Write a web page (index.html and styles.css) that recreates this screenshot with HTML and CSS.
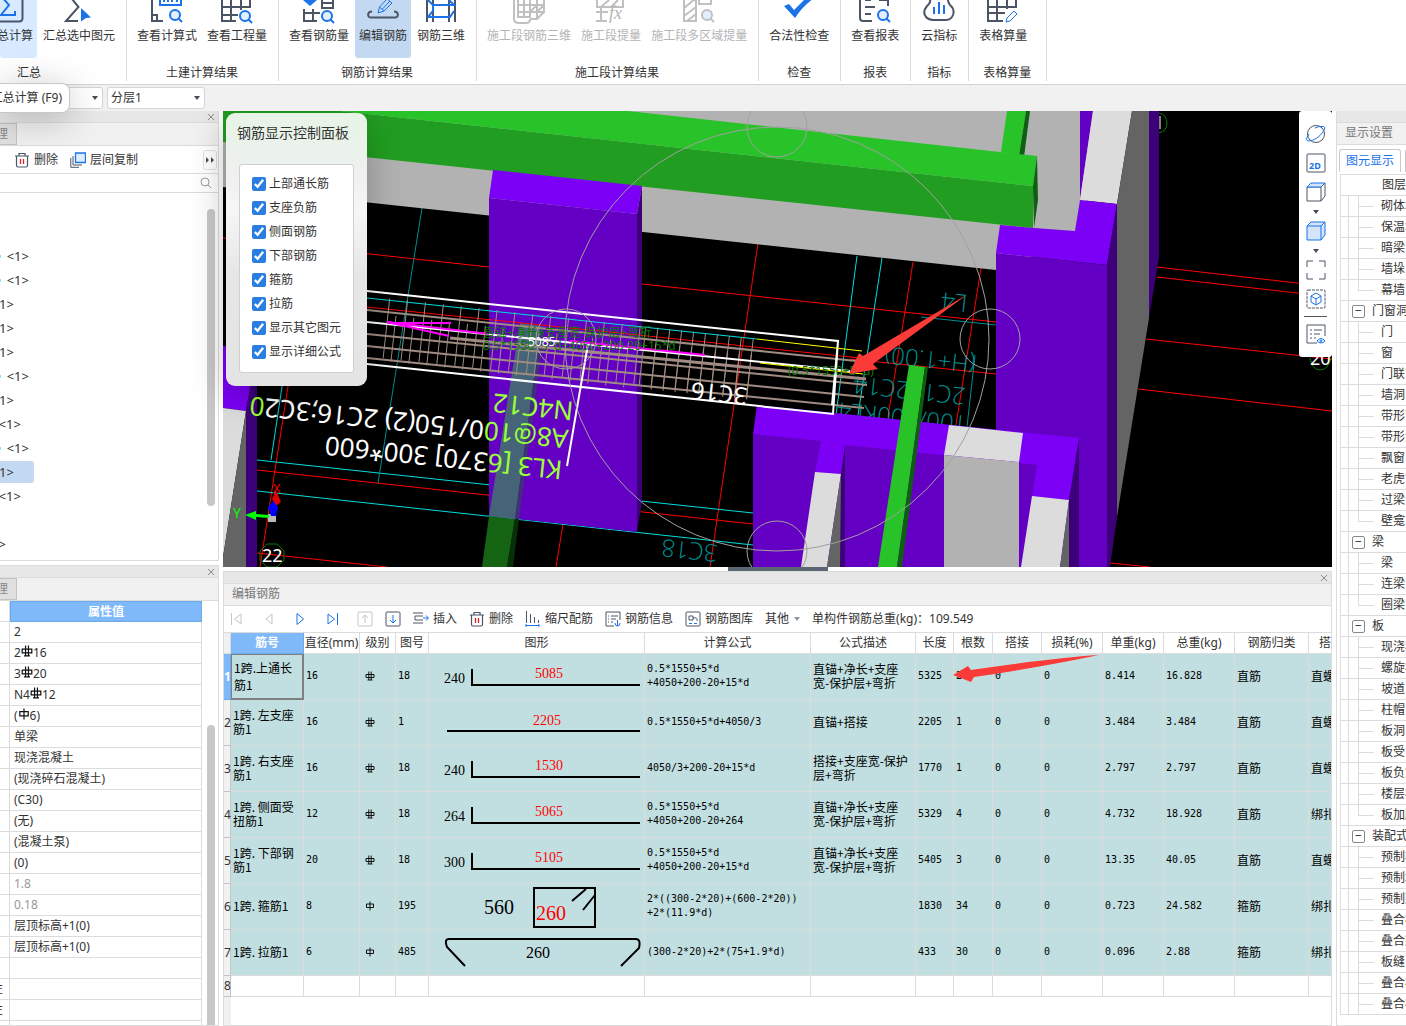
FILE: index.html
```html
<!DOCTYPE html>
<html lang="zh-CN">
<head>
    <meta charset="UTF-8">
    <meta name="viewport" content="width=device-width, initial-scale=1.0">
    <title>编辑钢筋</title>
    <link rel="stylesheet" href="styles.css">
</head>
<body>
    <!-- shared symbols -->
    <svg class="sprite" aria-hidden="true">
        <symbol id="lens" viewBox="0 0 14 14"><circle cx="6" cy="6" r="5" fill="#e3efff"/><path d="M9.500 9.500L13 13"/></symbol>
        <symbol id="trash" viewBox="0 0 16 16"><path d="M1 4h14M5 4V1.500h6V4M2.500 4v9.500q0 1.500 1.500 1.500h8q1.500 0 1.500-1.500V4" fill="none" stroke="#4b5566" stroke-width="1.200"/><path d="M6.500 7v5M9.500 7v5" stroke="#e02020" stroke-width="1.300"/></symbol>
        <symbol id="hrb" viewBox="0 0 10 10"><path d="M1 3.500h8v3H1zM3.800.5V9M6.200.5V9M2.500 9h5" fill="none" stroke="#111"/></symbol>
        <symbol id="hpb" viewBox="0 0 10 10"><path d="M1.500 3h7v3.500h-7zM5 .5V9.500" fill="none" stroke="#111"/></symbol>
        <symbol id="close" viewBox="0 0 8 8"><path d="M1 1l6 6M7 1L1 7" stroke="#8a8a8a" fill="none"/></symbol>
    </svg>

    <header class="ribbon">
        <section class="group group-first">
            <div class="tools">
                <button class="tool hot"><svg viewBox="0 0 32 24"><path class="d" d="M2 0V18q0 3.500 4 3.500H26q3.500 0 3.500-3.500V0"/><path class="b" d="M8 -4L16 5L8 15H22V11"/></svg>汇总计算</button>
                <button class="tool"><svg viewBox="0 0 32 24"><path class="d" d="M9 -1L15.500 7L3 21H15"/><path fill="#1a73e8" d="M18 8L28 17.500L23 18L18 21.500z"/></svg>汇总选中图元</button>
            </div>
            <h2>汇总</h2>
        </section>
        <section class="group">
            <div class="tools">
                <button class="tool"><svg viewBox="0 0 32 24"><path class="d" d="M1 0V21H12M1 15H6V21"/><path class="b" d="M9 0V5H30V0M13 0V2M17 0V2M21 0V2M26 0V2"/><use href="#lens" class="b" x="18" y="9" width="14" height="14"/></svg>查看计算式</button>
                <button class="tool"><svg viewBox="0 0 32 24"><path class="d" d="M1 0V21H15M10 0V21M20 0V10M29 0V7H1M1 15H17"/><use href="#lens" class="b" x="18" y="10" width="14" height="14"/></svg>查看工程量</button>
            </div>
            <h2>土建计算结果</h2>
        </section>
        <section class="group">
            <div class="tools">
                <button class="tool"><svg viewBox="0 0 32 24"><path class="d" d="M1 9V21H14M10 9V21M1 13H17M19 0V8H30V0M19 3H30"/><path fill="#1a73e8" d="M0 0L7 6L14 0z"/><use href="#lens" class="b" x="18" y="10" width="14" height="14"/></svg>查看钢筋量</button>
                <button class="tool active"><svg viewBox="0 0 32 24"><path class="d" d="M5 11.500C0 11.500 0 17.500 4 17.500H28C32 17.500 32 11.500 27 11.500"/><path class="b thin" d="M11 13L12.500 7L20 -1L25 3L17 11zM12.500 7L17 11M15.500 9L23 1"/></svg>编辑钢筋</button>
                <button class="tool"><svg viewBox="0 0 32 24"><path class="d" d="M2 0V22M8 0V22M24 0V22M30 0V22"/><path class="b" d="M3 17L8 11L8 5M8 5H29L24 0M3 17H25L29 11M8 5L3 0"/></svg>钢筋三维</button>
            </div>
            <h2>钢筋计算结果</h2>
        </section>
        <section class="group">
            <div class="tools">
                <button class="tool" disabled><svg viewBox="0 0 32 24"><path class="d" d="M1 0V19q0 4 5 4H13q4 0 4-4M5 0V17H17V0M11 0V17M5 5H31V0M5 12H31V5M24 0V19H17M31 5L24 12M24 5L17 12M31 12L24 19"/></svg>施工段钢筋三维</button>
                <button class="tool" disabled><svg viewBox="0 0 32 24"><path class="d" d="M2 0V7H28V0M6 7V22M1 12H13M1 21H12M6 7L14 0M16 7L23 0"/><text class="fx" x="14" y="19">fx</text></svg>施工段提量</button>
                <button class="tool" disabled><svg viewBox="0 0 32 24"><path class="d" d="M1 0V21H13V0M1 8L12 -1M1 16L13 7M4 21L13 14M16 0V4H28V0"/><use href="#lens" class="g" x="18" y="9" width="14" height="14"/></svg>施工段多区域提量</button>
            </div>
            <h2>施工段计算结果</h2>
        </section>
        <section class="group">
            <div class="tools">
                <button class="tool"><svg viewBox="0 0 32 24"><path fill="#1a73e8" d="M1 6L6 4L11 10L23 -2H31Q19 7 12 18z"/></svg>合法性检查</button>
            </div>
            <h2>检查</h2>
        </section>
        <section class="group">
            <div class="tools">
                <button class="tool"><svg viewBox="0 0 32 24"><path class="d" d="M1 0V18q0 3 3 3H13M6 0H12M6 7H16M6 14H12M20 0H29V6"/><use href="#lens" class="b" x="18" y="9" width="14" height="14"/></svg>查看报表</button>
            </div>
            <h2>报表</h2>
        </section>
        <section class="group">
            <div class="tools">
                <button class="tool"><svg viewBox="0 0 32 24"><path class="d" d="M7 -1Q8 3 4 6Q-1 12 3 17Q6 20 10 20H23Q28 20 30 15Q32 9 27 5Q25 3 25 -1"/><path class="b" d="M11 7V14M16 2V14M21 5V14"/></svg>云指标</button>
            </div>
            <h2>指标</h2>
        </section>
        <section class="group group-wide">
            <div class="tools">
                <button class="tool"><svg viewBox="0 0 32 24"><path class="d" d="M1 0V21H16M10 0V21M20 0V9M29 0V7H1M1 13H18"/><path class="b thin" d="M19 22L20 18L27 11L30 14L23 21z"/></svg>表格算量</button>
            </div>
            <h2>表格算量</h2>
        </section>
    </header>

    <div class="layer-bar">
        <label class="pick pick-floor"><select aria-label="楼层"><option></option></select></label>
        <label class="pick"><select aria-label="分层"><option>分层1</option></select></label>
        <div class="tooltip" role="tooltip">汇总计算 (F9)</div>
    </div>

    <main class="workspace">
        <aside class="left">
            <section class="panel component-list">
                <div class="titlebar"><button aria-label="关闭"><svg><use href="#close"/></svg></button></div>
                <div class="tabs"><button class="tab">理</button></div>
                <div class="list-tools">
                    <button class="text-btn del"><svg viewBox="0 0 16 16"><use href="#trash"/></svg>删除</button>
                    <button class="text-btn"><svg viewBox="0 0 16 16"><path d="M5.500 1h10v9.500h-10z" fill="#dfebff" stroke="#1a73e8" stroke-width="1.300"/><path d="M3 4v9h9M.8 6v9.300H9" fill="none" stroke="#4b5566"/></svg>层间复制</button>
                    <button class="more" aria-label="更多"><svg viewBox="0 0 10 8"><path d="M1 1l3 3-3 3zM6 1l3 3-3 3z" fill="#444c5a"/></svg></button>
                </div>
                <div class="search"><svg viewBox="0 0 12 12"><circle cx="5" cy="5" r="4" fill="none" stroke="#999"/><path d="M8 8l3 3" stroke="#999"/></svg></div>
                <div class="list-body">
                    <ul class="members">
                        <li class="lv3 dot">&lt;1&gt;</li>
                        <li class="lv3 dot">&lt;1&gt;</li>
                        <li class="lv1">&lt;1&gt;</li>
                        <li class="lv1">&lt;1&gt;</li>
                        <li class="lv1">&lt;1&gt;</li>
                        <li class="lv3 dot">&lt;1&gt;</li>
                        <li class="lv1">&lt;1&gt;</li>
                        <li class="lv2">&lt;1&gt;</li>
                        <li class="lv3 dot">&lt;1&gt;</li>
                        <li class="lv1 selected">&lt;1&gt;</li>
                        <li class="lv2">&lt;1&gt;</li>
                        <li class="lv2"></li>
                        <li class="lv0">&lt;1&gt;</li>
                    </ul>
                    <div class="scroll"></div>
                </div>
            </section>
            <section class="panel props">
                <div class="titlebar"><button aria-label="关闭"><svg><use href="#close"/></svg></button></div>
                <div class="tabs"><button class="tab">理</button></div>
                <div class="props-body">
                    <table>
                        <thead><tr><td></td><th>属性值</th></tr></thead>
                        <tbody>
                            <tr><td></td><td>2</td></tr>
                            <tr><td></td><td>2<svg><use href="#hrb"/></svg>16</td></tr>
                            <tr><td></td><td>3<svg><use href="#hrb"/></svg>20</td></tr>
                            <tr><td></td><td>N4<svg><use href="#hrb"/></svg>12</td></tr>
                            <tr><td></td><td>(<svg><use href="#hpb"/></svg>6)</td></tr>
                            <tr><td></td><td>单梁</td></tr>
                            <tr><td></td><td>现浇混凝土</td></tr>
                            <tr><td></td><td>(现浇碎石混凝土)</td></tr>
                            <tr><td></td><td>(C30)</td></tr>
                            <tr><td></td><td>(无)</td></tr>
                            <tr><td></td><td>(混凝土泵)</td></tr>
                            <tr><td></td><td>(0)</td></tr>
                            <tr class="readonly"><td></td><td>1.8</td></tr>
                            <tr class="readonly"><td></td><td>0.18</td></tr>
                            <tr><td></td><td>层顶标高+1(0)</td></tr>
                            <tr><td></td><td>层顶标高+1(0)</td></tr>
                            <tr><td></td><td></td></tr>
                            <tr><td><span>性</span></td><td></td></tr>
                            <tr><td><span>性</span></td><td></td></tr>
                            <tr><td></td><td></td></tr>
                        </tbody>
                    </table>
                    <div class="scroll"></div>
                </div>
            </section>
        </aside>

        <div class="center">
            <section class="viewport">
                <svg class="scene" viewBox="223 111 1109 456" preserveAspectRatio="xMinYMin slice">
                    <rect x="223" y="111" width="2400" height="1200" fill="#000"/>
                    <!-- axis grid -->
                    <g class="line red">
                        <path d="M223 238L489 267M642 284L996 322M758 243L710 567M913 262L888 417M981 268L956 425M1157 267L1332 287M1157 277L1332 297M1146 339L1332 359M1138 389L1332 411M1110 563L1150 567M850 359L996 374M257 470L753 524M289 380L260 567M257 553L387 567M563 524L556 567"/>
                    </g>
                    <g class="line cyan">
                        <path d="M857 256L836 415M882 258L858 415M257 460L753 513M257 491L753 545M283 380L271 460"/>
                    </g>
                    <path class="line teal" d="M422 208L378 483M921 317L996 325M975 355L967 427"/>
                    <g class="teal-text">
                        <text transform="translate(976 356) rotate(186)">(H+1.00)</text>
                        <text transform="translate(966 388) rotate(186)">2C12</text>
                        <text transform="translate(910 382) rotate(186)">2C14</text>
                        <text transform="translate(968 416) rotate(186)">100/200KL4</text>
                        <text transform="translate(968 295) rotate(186)">L4</text>
                        <text transform="translate(718 545) rotate(186)">3C18</text>
                    </g>
                    <!-- far wall -->
                    <path fill="#b2b2b2" d="M223 111H1100L1080 240L996 270L223 187z"/>
                    <path fill="#28c328" d="M1007 111H1026L1019 156L1001 152z"/>
                    <path fill="#0f5f12" d="M1026 111H1030L1024 157L1019 156z"/>
                    <path fill="#219e21" d="M223 111H340L1033 186V228L223 142z"/>
                    <path fill="#28c328" d="M340 111H628L1037 156L1033 186z"/>
                    <path fill="#0f5f12" d="M1033 186L1037 156L1038 200L1034 228z"/>
                    <!-- middle column -->
                    <path fill="#7b00f5" d="M493 170L642 186L637 214L489 198z"/>
                    <path fill="#6400c3" d="M489 198L637 214V532L489 516z"/>
                    <path fill="#3c0078" d="M637 214L642 186V502L637 532z"/>
                    <path fill="#146414" d="M489 516L515 519L507 567H482z"/>
                    <path fill="#083008" d="M515 519L519 519L513 567H507z"/>
                    <path fill="#466478" d="M520 323L541 326L515 519L489 516z"/>
                    <path fill="#3f3078" d="M541 326L545 327L519 519L515 519z"/>
                    <!-- right column -->
                    <path fill="#6400c3" d="M1080 111H1093L1080 200z"/>
                    <path fill="#dcdcdc" d="M1093 111H1132L1117 204L1080 200z"/>
                    <path fill="#646464" d="M1132 111H1149V318L1117 517V204z"/>
                    <path fill="#3c0078" d="M1149 111H1159V257L1149 318z"/>
                    <path fill="#7b00f5" d="M1000 225L1034 228L1075 231L1080 200L1117 204L1107 265L996 253z"/>
                    <path fill="#6400c3" d="M996 253L1107 265V567H996z"/>
                    <path fill="#3c0078" d="M1107 265L1117 204V517L1110 567H1107z"/>
                    <!-- front walls -->
                    <path fill="#6400c3" d="M753 434L1079 438V567H753z"/>
                    <path fill="#7b00f5" d="M757 405L1079 438L1069 500L1032 496L1037 465L845 445L841 474L815 472L821 441L753 434z"/>
                    <path fill="#dcdcdc" d="M949 425L1023 433L1019 462L944 455zM815 472L841 474L827 567H801zM1032 496L1069 500L1060 567H1021z"/>
                    <path fill="#b2b2b2" d="M944 455L1019 462V567H944z"/>
                    <path fill="#646464" d="M841 474V567H827zM1069 500V567H1060z"/>
                    <path fill="#3c0078" d="M841 474L845 445V567H840zM1069 500L1079 438V567H1069z"/>
                    <path fill="#28c328" d="M909 365L925 367L897 567H878z"/>
                    <path fill="#0f5f12" d="M925 367H928L902 567H897z"/>
                    <!-- left wall -->
                    <path fill="#7b00f5" d="M223 346L257 350L246 411L223 408z"/>
                    <path fill="#dcdcdc" d="M223 408L246 411L223 557z"/>
                    <path fill="#646464" d="M246 411V567H223V557z"/>
                    <path fill="#3c0078" d="M257 350V567H246V411z"/>
                    <!-- beam reinforcement -->
                    <path class="line cyan" d="M367 298L757 339"/>
                    <path class="line red" d="M367 307L860 358"/>
                    <path class="stirrup wide" d="M376 327L640 356"/>
                    <path class="stirrup wide back" d="M388 338L640 366"/>
                    <path class="stirrup tight" d="M642 356L754 369"/>
                    <path class="stirrup tight back" d="M648 366L754 377"/>
                    <path class="bars" d="M367 310L866 362M367 334L867 385M367 346L864 397M367 358L864 408"/>
                    <path class="bars thick" d="M450 338L866 379"/>
                    <path fill="none" stroke="#fff" stroke-width="2" d="M367 291L838 341L833 414L367 364M838 341L832 405M367 322L850 371M588 344L567 466"/>
                    <path fill="none" stroke="#f0f" stroke-width="2" d="M387 323H451M387 322L449 336M387 322L489 334M570 341L705 355"/>
                    <path fill="none" stroke="#ff0" d="M757 339L862 351M760 363L863 374"/>
                    <g class="hint-text">
                        <text x="483" y="337">直锚+净长+支座宽-保护层+弯折</text>
                        <text x="483" y="350">0.5*1550+5*d+4050+200-20+15*d</text>
                        <text x="788" y="375">(0.5*1550+5*d)</text>
                        <text x="528" y="346" fill="#fff">5085</text>
                    </g>
                    <g class="beam-text">
                        <text transform="translate(574 402) rotate(186)">N4C12</text>
                        <text transform="translate(569 430) rotate(186)">A8@10<tspan fill="#fff">0/150(2) 2C16;3C2</tspan>0</text>
                        <text transform="translate(563 461) rotate(186)">KL3 [6<tspan fill="#fff">370] 300*600</tspan></text>
                        <text transform="translate(748 388) rotate(186)" fill="#fff">3C16</text>
                    </g>
                    <!-- orbit rings -->
                    <g fill="none" stroke="#a0a0a0">
                        <circle cx="777" cy="339" r="212"/><circle cx="777" cy="127" r="30"/><circle cx="990" cy="339" r="30"/><circle cx="566" cy="339" r="30"/><circle cx="777" cy="551" r="30"/>
                    </g>
                    <g fill="none" stroke="#0a780a">
                        <path d="M267 544h10l7 7v9l-7 7h-10l-7-7v-9zM1159 113q8 2 8 10t-8 10M1310 358q2 12 10 12t11-12"/>
                    </g>
                    <g class="axis-text">
                        <text x="262" y="562">22</text><text x="1310" y="365">20</text>
                        <path d="M1160 116v13" stroke="#fff"/>
                        <text x="273" y="493" fill="#f00" font-size="13">X</text>
                        <text x="233" y="518" fill="#0f0" font-size="14">Y</text>
                    </g>
                    <path d="M268 514h8v8h-8z" fill="#bbb"/>
                    <path d="M272 499l4-9 5 12-5 4z" fill="#e00000"/>
                    <path d="M245 515l11-4v3l13 1v3l-13-1v3z" fill="#0f0"/>
                    <path d="M273 501l5 6-2 9h-5l-3-9z" fill="#00f"/>
                    <path d="M849 374L859 353L863 356L968 294L873 364L878 369z" fill="#fb3b37"/>
                </svg>

                <form class="rebar-panel">
                    <h3>钢筋显示控制面板</h3>
                    <div class="checks">
                        <label><input type="checkbox" checked>上部通长筋</label>
                        <label><input type="checkbox" checked>支座负筋</label>
                        <label><input type="checkbox" checked>侧面钢筋</label>
                        <label><input type="checkbox" checked>下部钢筋</label>
                        <label><input type="checkbox" checked>箍筋</label>
                        <label><input type="checkbox" checked>拉筋</label>
                        <label><input type="checkbox" checked>显示其它图元</label>
                        <label><input type="checkbox" checked>显示详细公式</label>
                    </div>
                </form>

                <nav class="view-tools">
                    <button aria-label="动态观察"><svg viewBox="0 0 22 22"><circle cx="11" cy="11" r="8.500"/><path class="b" d="M4 11Q-1 18 4 18Q12 17 18 9Q22 3 17 3.500Q14 3 10 5"/></svg></button>
                    <button aria-label="二维"><svg viewBox="0 0 22 22"><rect x="2" y="2" width="18" height="18" rx="1"/><text x="4" y="17">2D</text></svg></button>
                    <button aria-label="线框"><svg viewBox="0 0 22 22"><path d="M2 6H16V20H2zM16 20L20 15V2"/><path class="b solid" d="M2 6L6 2H20L16 6z"/></svg></button>
                    <i></i>
                    <button aria-label="实体"><svg viewBox="0 0 22 22"><path class="b solid" d="M2 6L6 2H20V15L16 20H2zM2 6H16V20M16 6L20 2"/></svg></button>
                    <i></i>
                    <button aria-label="全屏"><svg viewBox="0 0 22 22"><path d="M2 8V2H8M14 2H20V8M20 14V20H14M8 20H2V14"/></svg></button>
                    <button aria-label="局部三维"><svg viewBox="0 0 22 22"><rect x="2" y="2" width="18" height="18" rx="1" stroke-dasharray="3 1"/><path class="b" d="M11 5L16 8V14L11 17L6 14V8zM6 8L11 11L16 8M11 11V17"/></svg></button>
                    <hr>
                    <button aria-label="显示设置"><svg viewBox="0 0 22 22"><path d="M12 20H2V2H20V13M5 7H7M9 7H17M5 11H7M9 11H15M5 15H7M9 15H11"/><path class="b" d="M12 18Q16 13 20 18Q16 22 12 18z"/><circle class="b" cx="16" cy="18" r="1"/></svg></button>
                </nav>
            </section>

            <section class="panel editor">
                <div class="titlebar"><button aria-label="关闭"><svg><use href="#close"/></svg></button></div>
                <h2 class="panel-name">编辑钢筋</h2>
                <div class="edit-tools">
                    <button aria-label="首行" disabled><svg viewBox="0 0 16 16"><path d="M2.500 2v12M12 3v10L5.500 8z"/></svg></button>
                    <button aria-label="上一行" disabled><svg viewBox="0 0 16 16"><path d="M11 3v10L5 8z"/></svg></button>
                    <button aria-label="下一行" class="b"><svg viewBox="0 0 16 16"><path d="M4 2.500v11L10.500 8z"/></svg></button>
                    <button aria-label="末行" class="b"><svg viewBox="0 0 16 16"><path d="M3 3v10L9.500 8zM12.500 2v12"/></svg></button>
                    <button aria-label="上移" disabled><svg viewBox="0 0 16 16"><rect x="1" y="1" width="14" height="14" rx="1"/><path d="M8 12V4M5 7l3-3 3 3"/></svg></button>
                    <button aria-label="下移" class="near"><svg viewBox="0 0 16 16"><rect x="1" y="1" width="14" height="14" rx="1"/><path class="b" d="M8 4v8M5 9l3 3 3-3"/></svg></button>
                    <button class="near"><svg viewBox="0 0 16 16"><path d="M0 2h10M0 12h10M10 5H2v4h8"/><path class="b" d="M10 7h5M13 4.500L15.500 7 13 9.500"/></svg>插入</button>
                    <button class="near"><svg viewBox="0 0 16 16"><use href="#trash"/></svg>删除</button>
                    <button class="near"><svg viewBox="0 0 16 16"><path d="M1.500 0v12M5.500 3v9M9.500 6v6M13.500 9v3"/><path class="b" d="M1 14.500h13M1 13v3M14 13v3"/></svg>缩尺配筋</button>
                    <button class="near"><svg viewBox="0 0 16 16"><path d="M9 15H1V1h14v8M3 5h1M6 5h7M3 8h1M6 8h5M3 11h1M6 11h2"/><path class="b" d="M12.500 9v6M10 12q0 3 2.500 3t2.500-3"/></svg>钢筋信息</button>
                    <button class="near"><svg viewBox="0 0 16 16"><rect x="1" y="1" width="14" height="14" rx="1"/><path d="M4 5h4v4H4zM8 7q5-1 4 3"/><path class="b" d="M4 12.500h3M9 12.500h3"/></svg>钢筋图库</button>
                    <button class="near">其他<i></i></button>
                    <span class="near">单构件钢筋总重(kg)：109.549</span>
                </div>
                <div class="grid-wrap">
                    <table class="grid">
                        <colgroup><col class="w7"><col class="w73"><col class="w56"><col class="w36"><col class="w33"><col class="w216"><col class="w166"><col class="w105"><col class="w38"><col class="w39"><col class="w49"><col class="w61"><col class="w61"><col class="w71"><col class="w74"><col class="w90"></colgroup>
                        <thead>
                            <tr><th></th><th class="current">筋号</th><th>直径(mm)</th><th>级别</th><th>图号</th><th>图形</th><th>计算公式</th><th>公式描述</th><th>长度</th><th>根数</th><th>搭接</th><th>损耗(%)</th><th>单重(kg)</th><th>总重(kg)</th><th>钢筋归类</th><th class="cut">搭接形式</th></tr>
                        </thead>
                        <tbody>
                            <tr><th class="current">1</th><td class="zh focus">1跨.上通长筋1</td><td>16</td><td><svg class="grade"><use href="#hrb"/></svg></td><td>18</td>
                                <td class="shape"><svg viewBox="0 0 215 45"><path d="M43 15V31H211"/><text x="15" y="29">240</text><text class="r" x="106" y="24">5085</text></svg></td>
                                <td>0.5*1550+5*d<br>+4050+200-20+15*d</td><td class="zh">直锚+净长+支座<br>宽-保护层+弯折</td><td>5325</td><td>2</td><td>0</td><td>0</td><td>8.414</td><td>16.828</td><td class="zh">直筋</td><td class="zh cut">直螺纹连接</td></tr>
                            <tr><th>2</th><td class="zh">1跨. 左支座筋1</td><td>16</td><td><svg class="grade"><use href="#hrb"/></svg></td><td>1</td>
                                <td class="shape"><svg viewBox="0 0 215 45"><path d="M18 31H211"/><text class="r" x="104" y="25">2205</text></svg></td>
                                <td>0.5*1550+5*d+4050/3</td><td class="zh">直锚+搭接</td><td>2205</td><td>1</td><td>0</td><td>0</td><td>3.484</td><td>3.484</td><td class="zh">直筋</td><td class="zh cut">直螺纹连接</td></tr>
                            <tr><th>3</th><td class="zh">1跨. 右支座筋1</td><td>16</td><td><svg class="grade"><use href="#hrb"/></svg></td><td>18</td>
                                <td class="shape"><svg viewBox="0 0 215 45"><path d="M43 15V31H211"/><text x="15" y="29">240</text><text class="r" x="106" y="24">1530</text></svg></td>
                                <td>4050/3+200-20+15*d</td><td class="zh">搭接+支座宽-保护<br>层+弯折</td><td>1770</td><td>1</td><td>0</td><td>0</td><td>2.797</td><td>2.797</td><td class="zh">直筋</td><td class="zh cut">直螺纹连接</td></tr>
                            <tr><th>4</th><td class="zh">1跨. 侧面受扭筋1</td><td>12</td><td><svg class="grade"><use href="#hrb"/></svg></td><td>18</td>
                                <td class="shape"><svg viewBox="0 0 215 45"><path d="M43 15V31H211"/><text x="15" y="29">264</text><text class="r" x="106" y="24">5065</text></svg></td>
                                <td>0.5*1550+5*d<br>+4050+200-20+264</td><td class="zh">直锚+净长+支座<br>宽-保护层+弯折</td><td>5329</td><td>4</td><td>0</td><td>0</td><td>4.732</td><td>18.928</td><td class="zh">直筋</td><td class="zh cut">绑扎</td></tr>
                            <tr><th>5</th><td class="zh">1跨. 下部钢筋1</td><td>20</td><td><svg class="grade"><use href="#hrb"/></svg></td><td>18</td>
                                <td class="shape"><svg viewBox="0 0 215 45"><path d="M43 15V31H211"/><text x="15" y="29">300</text><text class="r" x="106" y="24">5105</text></svg></td>
                                <td>0.5*1550+5*d<br>+4050+200-20+15*d</td><td class="zh">直锚+净长+支座<br>宽-保护层+弯折</td><td>5405</td><td>3</td><td>0</td><td>0</td><td>13.35</td><td>40.05</td><td class="zh">直筋</td><td class="zh cut">直螺纹连接</td></tr>
                            <tr><th>6</th><td class="zh">1跨. 箍筋1</td><td>8</td><td><svg class="grade"><use href="#hpb"/></svg></td><td>195</td>
                                <td class="shape"><svg viewBox="0 0 215 45"><path d="M105 4H166V43H105zM143 17L157 5M154 26L166 11"/><text class="big" x="55" y="30">560</text><text class="big r" x="107" y="36">260</text></svg></td>
                                <td>2*((300-2*20)+(600-2*20))<br>+2*(11.9*d)</td><td></td><td>1830</td><td>34</td><td>0</td><td>0</td><td>0.723</td><td>24.582</td><td class="zh">箍筋</td><td class="zh cut">绑扎</td></tr>
                            <tr><th>7</th><td class="zh">1跨. 拉筋1</td><td>6</td><td><svg class="grade"><use href="#hpb"/></svg></td><td>485</td>
                                <td class="shape"><svg viewBox="0 0 215 45"><path d="M36 36L18 17Q15 9 20 9H207Q212 9 210 18L192 36"/><text class="mid" x="97" y="28">260</text></svg></td>
                                <td>(300-2*20)+2*(75+1.9*d)</td><td></td><td>433</td><td>30</td><td>0</td><td>0</td><td>0.096</td><td>2.88</td><td class="zh">箍筋</td><td class="zh cut">绑扎</td></tr>
                            <tr class="blank"><th>8</th><td></td><td></td><td></td><td></td><td></td><td></td><td></td><td></td><td></td><td></td><td></td><td></td><td></td><td></td><td></td></tr>
                        </tbody>
                    </table>
                    <svg class="pointer" viewBox="0 0 150 32"><path d="M1 21L16 12L19 16Q100 4 147 1Q90 13 22 23L19 28z" fill="#fb3b37"/></svg>
                </div>
            </section>
        </div>

        <aside class="panel right">
            <div class="titlebar"></div>
            <h2 class="panel-name">显示设置</h2>
            <div class="view-tabs"><button class="on">图元显示</button><button>楼层显示</button></div>
            <ul class="layers">
                <li class="head">图层</li>
                <li>砌体墙</li><li>保温墙</li><li>暗梁</li><li>墙垛</li><li class="last">幕墙</li>
                <li class="parent"><button>−</button>门窗洞</li>
                <li>门</li><li>窗</li><li>门联窗</li><li>墙洞</li><li>带形窗</li><li>带形洞</li><li>飘窗</li><li>老虎窗</li><li>过梁</li><li class="last">壁龛</li>
                <li class="parent"><button>−</button>梁</li>
                <li>梁</li><li>连梁</li><li class="last">圈梁</li>
                <li class="parent"><button>−</button>板</li>
                <li>现浇板</li><li>螺旋板</li><li>坡道</li><li>柱帽</li><li>板洞</li><li>板受力筋</li><li>板负筋</li><li>楼层板带</li><li class="last">板加腋</li>
                <li class="parent"><button>−</button>装配式</li>
                <li>预制柱</li><li>预制墙</li><li>预制梁</li><li>叠合板</li><li>叠合梁</li><li>板缝</li><li>叠合板</li><li>叠合板</li>
            </ul>
        </aside>
    </main>
</body>
</html>
```

FILE: styles.css
```css
:root {
    --blue: #1a73e8;
    --dark: #4b5566;
    --line: #dcdcdc;
    --bar: #e7e7e7;
    --soft: #f1f1f1;
    --head: #80b9f9;
    --cell: #c1dfe1;
}

* {
    margin: 0;
    padding: 0;
    box-sizing: border-box;
}

body {
    display: flex;
    flex-direction: column;
    height: 100vh;
    overflow: hidden;
    background: #fff;
    color: #333;
    font-family: "Noto Sans", "Noto Sans CJK SC", sans-serif;
    font-size: 12px;
    line-height: 16px;
}

button, select, input {
    font: inherit;
    color: inherit;
}

button {
    border: 0;
    background: none;
    white-space: nowrap;
}

h2, h3 {
    font-size: 12px;
    font-weight: normal;
}

ul {
    list-style: none;
}

.sprite {
    position: absolute;
    width: 0;
    height: 0;
}

/* ribbon */
.ribbon {
    display: flex;
    flex: none;
    height: 85px;
    padding-bottom: 3px;
    border-bottom: 1px solid #d4d4d4;
}

.group {
    display: flex;
    flex-direction: column;
    justify-content: space-between;
    flex: none;
    padding: 0 7px 0 6px;
    border-right: 1px solid var(--line);
}

.group-first {
    padding-left: 0;
}

.group-wide {
    padding-right: 15px;
}

.group h2 {
    text-align: center;
}

.group-wide h2 {
    margin-right: -8px;
}

.group-first h2 {
    width: 58px;
}

.tools {
    display: flex;
    gap: 2px;
}

.tool {
    display: flex;
    flex-direction: column;
    align-items: center;
    gap: 4px;
    height: 58px;
    padding: 0 4px;
    border-radius: 0 0 3px 3px;
}

.tool svg {
    flex: none;
    width: 32px;
    height: 24px;
}

.tool.hot {
    width: 37px;
    padding: 0 23px 0 4px;
    background: #d8eaff;
}

.tool.active {
    background: #c3d9f2;
}

.tool:disabled {
    color: #b4b4b4;
}

.d, .b, .g {
    fill: none;
    stroke: var(--dark);
    stroke-width: 2;
}

.b {
    stroke: var(--blue);
}

.thin {
    stroke-width: 1;
}

.g, .tool:disabled .d {
    stroke: #c0c0c0;
}

.fx {
    font: italic 18px "Liberation Serif", serif;
    fill: #b4b4b4;
}

/* floor and layer pickers */
.layer-bar {
    position: relative;
    z-index: 3;
    display: flex;
    flex: none;
    align-items: flex-start;
    gap: 4px;
    height: 26px;
    padding-top: 2px;
    background: var(--soft);
}

.pick {
    position: relative;
    width: 98px;
}

.pick-floor {
    width: 103px;
}

.pick select {
    appearance: none;
    width: 100%;
    height: 22px;
    padding: 0 3px;
    border: 1px solid #d4d4d4;
    border-radius: 3px;
    background: #fff;
}

.pick::after,
.edit-tools i,
.view-tools i {
    content: "";
    border: 3px solid transparent;
    border-top: 4px solid #444c5a;
    border-bottom: 0;
}

.pick::after {
    position: absolute;
    top: 9px;
    right: 5px;
}

.tooltip {
    position: absolute;
    top: -2px;
    left: 0;
    display: flex;
    justify-content: flex-end;
    width: 70px;
    padding: 6px 7px;
    border: 1px solid #c8c8c8;
    border-left: 0;
    border-radius: 0 8px 8px 0;
    background: #fff;
    box-shadow: 0 6px 36px rgba(0, 0, 0, 0.25);
    white-space: nowrap;
}

/* docked panels */
.workspace {
    display: flex;
    flex: 1;
    gap: 4px;
    min-height: 0;
}

.left {
    display: flex;
    flex: none;
    flex-direction: column;
    gap: 4px;
    width: 219px;
}

.panel {
    display: flex;
    flex-direction: column;
    border: 1px solid var(--line);
    border-top: 0;
}

.titlebar {
    display: flex;
    flex: none;
    justify-content: flex-end;
    height: 12px;
    padding-right: 3px;
    border-bottom: 1px solid var(--line);
    background: var(--bar);
}

.titlebar button {
    display: flex;
    align-items: center;
}

.titlebar svg {
    width: 8px;
    height: 8px;
}

.tabs {
    flex: none;
    height: 23px;
    border-bottom: 1px solid var(--line);
    background: var(--soft);
}

.tab {
    display: flex;
    justify-content: flex-end;
    align-items: center;
    width: 17px;
    height: 22px;
    padding-right: 8px;
    border: 1px solid #c4c4c4;
    border-left: 0;
    background: #e0e0e0;
    color: #888;
}

.component-list {
    flex: 0 0 450px;
    border-left: 0;
}

.list-tools {
    display: flex;
    flex: none;
    align-items: center;
    gap: 12px;
    height: 28px;
    padding: 0 1px 0 14px;
    border-bottom: 1px solid var(--line);
}

.text-btn {
    display: flex;
    align-items: center;
    gap: 4px;
}

.text-btn svg {
    width: 16px;
    height: 16px;
}

.more {
    display: flex;
    align-items: center;
    justify-content: center;
    width: 14px;
    height: 20px;
    margin-left: auto;
    border: 1px solid #e0e0e0;
    border-radius: 3px;
}

.more svg {
    flex: none;
    width: 10px;
    height: 8px;
}

.search {
    display: flex;
    flex: none;
    align-items: center;
    justify-content: flex-end;
    height: 19px;
    padding-right: 6px;
    border-bottom: 1px solid var(--line);
}

.search svg {
    width: 12px;
    height: 12px;
}

.list-body {
    display: flex;
    flex: 1;
    justify-content: space-between;
    padding: 16px 3px 0 0;
}

.members {
    padding-top: 36px;
}

.members li {
    display: flex;
    align-items: center;
    justify-content: flex-end;
    height: 22px;
    margin-bottom: 2px;
    font-size: 13px;
}

.members .lv0 {
    width: 6px;
}

.members .lv1 {
    width: 14px;
}

.members .lv2 {
    width: 21px;
}

.members .lv3 {
    width: 29px;
}

.members .dot {
    justify-content: space-between;
}

.members .dot::before {
    content: "";
    width: 1px;
    height: 3px;
    background: #7fe6f7;
}

.members .selected {
    width: 34px;
    padding-right: 20px;
    border-radius: 0 3px 3px 0;
    background: #c3d9f2;
}

.scroll {
    width: 8px;
    height: 297px;
    border-radius: 4px;
    background: #c8c8c8;
}

.props {
    flex: 1;
    min-height: 0;
    overflow: hidden;
    border-top: 1px solid var(--line);
    border-left: 0;
}

.props-body {
    display: flex;
    align-items: flex-start;
    justify-content: space-between;
    padding-right: 3px;
}

.props table {
    width: 202px;
    table-layout: fixed;
    border-spacing: 0;
}

.props td {
    height: 21px;
    padding-left: 4px;
    border-right: 1px solid var(--line);
    border-bottom: 1px solid var(--line);
    line-height: 18px;
    white-space: nowrap;
}

.props td:first-child {
    width: 10px;
    padding: 0;
}

.props td span {
    display: block;
    width: 3px;
    overflow: hidden;
    direction: rtl;
}

.props th {
    height: 20px;
    border: 1px solid #6aa9ec;
    background: var(--head);
    color: #fff;
}

.props td svg {
    width: 12px;
    height: 12px;
}

.props .readonly {
    color: #999;
}

.props .scroll {
    height: 400px;
    margin-top: 124px;
}

/* model view */
.center {
    display: flex;
    flex: 1;
    flex-direction: column;
    gap: 4px;
    min-width: 0;
}

.viewport {
    position: relative;
    z-index: 2;
    flex: 0 0 456px;
}

.viewport::after {
    content: "";
    position: absolute;
    top: 100%;
    left: 50%;
    width: 100px;
    height: 4px;
    margin-left: -50px;
    background: #5c6675;
}

.scene {
    display: block;
    width: 100%;
    height: 100%;
    font-family: "Noto Sans", "Noto Sans CJK SC", sans-serif;
}

.line {
    fill: none;
}

.red {
    stroke: #f00;
}

.cyan {
    stroke: #00dede;
}

.teal {
    stroke: #008c8c;
}

.teal-text {
    fill: #009090;
    font: 300 24px "Open Sans", sans-serif;
}

.stirrup {
    fill: none;
    stroke: #a08c82;
    stroke-width: 60;
}

.stirrup.wide {
    stroke-dasharray: 1 17;
    stroke-dashoffset: -10;
}

.stirrup.tight {
    stroke-dasharray: 1 11;
}

.stirrup.back {
    stroke-width: 46;
    stroke-dashoffset: -5;
}

.bars {
    fill: none;
    stroke: #a08c82;
    stroke-width: 2;
}

.bars.thick {
    stroke-width: 3;
}

.hint-text {
    fill: #0a780a;
    font-size: 12px;
}

.beam-text {
    fill: #9aff3a;
    font-size: 26px;
}

.beam-text text:last-child {
    font-size: 24px;
}

.axis-text {
    fill: #fff;
    font-size: 18px;
}

.rebar-panel {
    position: absolute;
    top: 2px;
    left: 3px;
    width: 141px;
    padding: 8px 13px 13px;
    border-radius: 9px;
    background: linear-gradient(#e6f4e6, #f0f0f0 25%, #f6f6f6 35%, #e6e6e6 60%, #e4e4e4);
    box-shadow: 0 8px 36px rgba(0, 0, 0, 0.25);
}

.rebar-panel h3 {
    margin: 0 -2px 19px;
    font-size: 14px;
    line-height: 24px;
    white-space: nowrap;
}

.checks {
    padding: 7px 12px 8px;
    border: 1px solid #cfcfcf;
    border-radius: 3px;
    background: #fff;
}

.checks label {
    display: flex;
    align-items: center;
    gap: 3px;
    height: 24px;
    white-space: nowrap;
}

.checks input {
    flex: none;
    width: 14px;
    height: 14px;
    accent-color: #2a7de1;
}

.view-tools {
    position: absolute;
    top: 0;
    right: 0;
    display: flex;
    flex-direction: column;
    align-items: center;
    gap: 7px;
    width: 33px;
    height: 246px;
    padding-top: 12px;
    border-radius: 3px;
    background: #fff;
}

.view-tools button,
.view-tools svg {
    display: block;
    width: 22px;
    height: 22px;
}

.view-tools svg {
    fill: none;
    stroke: var(--dark);
}

.view-tools .b {
    stroke: var(--blue);
    stroke-width: 1;
}

.view-tools .solid {
    fill: #d4e4fb;
}

.view-tools text {
    fill: var(--blue);
    stroke: none;
    font-size: 9px;
    font-weight: bold;
}

.view-tools i {
    margin-bottom: -1px;
}

.view-tools hr {
    width: 23px;
    margin: -1px 0;
    border: 0;
    border-top: 1px solid #555;
}

/* rebar editor */
.editor {
    flex: 1;
    min-height: 0;
    border-top: 1px solid var(--line);
}

.panel-name {
    flex: none;
    height: 22px;
    padding-left: 8px;
    border-bottom: 1px solid var(--line);
    background: var(--soft);
    color: #777;
    line-height: 20px;
    white-space: nowrap;
}

.edit-tools {
    display: flex;
    flex: none;
    align-items: center;
    gap: 16px;
    height: 26px;
    padding-left: 5px;
    white-space: nowrap;
}

.edit-tools button {
    display: flex;
    align-items: center;
    gap: 4px;
    fill: none;
    stroke: var(--dark);
    stroke-width: 1;
}

.edit-tools button.b {
    stroke: var(--blue);
}

.edit-tools button:disabled {
    stroke: #c4c4c4;
}

.edit-tools svg {
    width: 16px;
    height: 16px;
}

.edit-tools .b {
    stroke: var(--blue);
    stroke-width: 1;
}

.edit-tools .near {
    margin-left: -4px;
}

.edit-tools i {
    margin-left: 1px;
    opacity: 0.6;
}

.grid-wrap {
    position: relative;
    flex: 1;
    overflow: hidden;
    border-top: 1px solid var(--line);
    background: linear-gradient(to right, var(--soft) 7px, #fff 7px);
}

.grid {
    width: 1175px;
    table-layout: fixed;
    border-spacing: 0;
    color: #000;
    font-family: "DejaVu Sans Mono", "Noto Sans CJK SC", monospace;
    font-size: 10px;
    line-height: 14px;
}

.grid th,
.grid td {
    border-right: 1px solid var(--line);
    border-bottom: 1px solid var(--line);
}

.grid th {
    height: 21px;
    color: #333;
    font-family: "Noto Sans", "Noto Sans CJK SC", sans-serif;
    font-size: 12px;
    font-weight: normal;
    white-space: nowrap;
}

.grid tbody th {
    background: var(--soft);
    border-color: #c4c4c4;
}

.grid .current,
.grid tbody .current {
    background: var(--head);
    border-color: #6aa9ec;
    color: #fff;
    font-weight: bold;
}

.grid td {
    height: 46px;
    padding: 0 2px 2px;
    background: var(--cell);
    overflow: hidden;
}

.grid .zh {
    font-family: "Noto Sans CJK SC", sans-serif;
    font-size: 12px;
}

.grid .cut {
    overflow: hidden;
    text-align: left;
    white-space: nowrap;
}

.grid th.cut {
    padding-left: 10px;
}

.grid .focus {
    border: 2px solid #808080;
    border-top-width: 1px;
    border-left-width: 1px;
    line-height: 17px;
}

.grid .blank td {
    height: 21px;
    background: #fff;
}

.grade {
    display: block;
    width: 10px;
    height: 10px;
    margin-left: 3px;
}

.grid .shape {
    padding: 0;
}

.shape svg {
    display: block;
    width: 215px;
    height: 45px;
}

.shape path {
    fill: none;
    stroke: #000;
    stroke-width: 2;
}

.shape text {
    font-family: "Liberation Serif", serif;
    font-size: 14px;
}

.shape .r {
    fill: #f00;
}

.shape .mid {
    font-size: 16px;
}

.shape .big {
    font-size: 20px;
}

.w7 { width: 7px; }
.w73 { width: 73px; }
.w56 { width: 56px; }
.w36 { width: 36px; }
.w33 { width: 33px; }
.w216 { width: 216px; }
.w166 { width: 166px; }
.w105 { width: 105px; }
.w38 { width: 38px; }
.w39 { width: 39px; }
.w49 { width: 49px; }
.w61 { width: 61px; }
.w71 { width: 71px; }
.w74 { width: 74px; }
.w90 { width: 90px; }

.pointer {
    position: absolute;
    top: 21px;
    left: 728px;
    width: 150px;
    height: 32px;
}

/* layer visibility */
.right {
    flex: 0 0 70px;
    overflow: hidden;
    border-right: 0;
}

.view-tabs {
    display: flex;
    flex: none;
    align-items: flex-end;
    gap: 4px;
    height: 27px;
    padding-left: 2px;
}

.view-tabs button {
    flex: none;
    height: 23px;
    padding: 0 6px;
    border: 1px solid #c8c8c8;
    border-bottom: 0;
    border-radius: 3px 3px 0 0;
    background: var(--bar);
}

.view-tabs .on {
    background: #fff;
    color: var(--blue);
}

.layers {
    margin: 2px 0 0 3px;
    border-top: 1px solid var(--line);
    border-left: 1px solid var(--line);
}

.layers li {
    display: flex;
    align-items: center;
    gap: 7px;
    height: 21px;
    padding-left: 17px;
    border-bottom: 1px solid var(--line);
    background: linear-gradient(var(--line), var(--line)) 7px 0 / 1px 100% no-repeat,
        linear-gradient(var(--line), var(--line)) 17px 0 / 1px 100% no-repeat;
    white-space: nowrap;
}

.layers li::before {
    content: "";
    flex: none;
    width: 16px;
    height: 1px;
    background: var(--line);
}

.layers .last {
    background-size: 1px 100%, 1px 50%;
}

.layers .head {
    padding-left: 18px;
    background: none;
}

.layers .head::before {
    background: none;
}

.layers .parent {
    padding-left: 11px;
    background-size: 1px 100%, 0 0;
}

.layers .parent::before {
    display: none;
}

.layers button {
    flex: none;
    width: 13px;
    height: 13px;
    border: 1px solid #888;
    border-radius: 2px;
    background: #fff;
    line-height: 10px;
}
```
